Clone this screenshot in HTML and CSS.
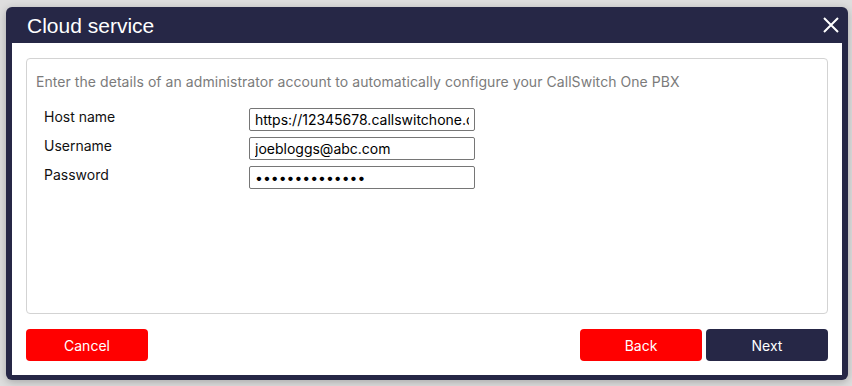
FILE: index.html
```html
<!DOCTYPE html>
<html lang="en">
<head>
    <meta charset="UTF-8">
    <meta name="viewport" content="width=device-width, initial-scale=1.0">
    <title>Cloud service</title>
    <link rel="stylesheet" href="styles.css">
</head>
<body>
    <div class="dialog">
        <div class="dialog-title">
            <h2>Cloud service</h2>
            <span class="close-btn">
                <svg width="16" height="16" viewBox="0 0 16 16">
                    <path d="M1 1 L15 15 M15 1 L1 15" stroke="#fff" stroke-width="2" fill="none"/>
                </svg>
            </span>
        </div>
        <div class="dialog-body">
            <div class="panel">
                <p class="intro">Enter the details of an administrator account to automatically configure your CallSwitch One PBX</p>
                <div class="form-grid">
                    <label for="host">Host name</label>
                    <input type="text" id="host" value="https://12345678.callswitchone.com">
                    <label for="username">Username</label>
                    <input type="text" id="username" value="joebloggs@abc.com">
                    <label for="password">Password</label>
                    <input type="password" id="password" value="password123456">
                </div>
            </div>
            <div class="actions">
                <button class="btn btn-red">Cancel</button>
                <div class="actions-right">
                    <button class="btn btn-red">Back</button>
                    <button class="btn btn-dark">Next</button>
                </div>
            </div>
        </div>
    </div>
</body>
</html>
```
FILE: styles.css
```css
* {
    margin: 0;
    padding: 0;
    box-sizing: border-box;
}

body {
    font-family: Inter, "Liberation Sans", sans-serif;
    background: #dedede;
    width: 852px;
    height: 386px;
    padding: 7px 4px 6px 6px;
}

.dialog {
    width: 842px;
    height: 373px;
    background: #262746;
    border-radius: 6px;
    padding: 0 6px 5px 6px;
    display: flex;
    flex-direction: column;
    box-shadow: 0 2px 8px rgba(0, 0, 0, 0.25);
}

.dialog-title {
    height: 36px;
    display: flex;
    align-items: center;
    justify-content: space-between;
    padding: 0 3px 0 15px;
}

.dialog-title h2 {
    font-family: "Liberation Sans", Arial, sans-serif;
    font-weight: normal;
    font-size: 21px;
    color: #fff;
    margin-top: 1px;
}

.close-btn {
    display: flex;
    cursor: pointer;
}

.dialog-body {
    flex: 1;
    background: #fff;
    padding: 15px 14px 14px 14px;
    display: flex;
    flex-direction: column;
}

.panel {
    flex: 1;
    border: 1px solid #d3d3d3;
    border-radius: 4px;
    padding: 14px 9px;
}

.intro {
    color: #7b7b7b;
    font-size: 14px;
    line-height: 18px;
    letter-spacing: 0.06px;
    margin-bottom: 17px;
}

.form-grid {
    display: grid;
    grid-template-columns: 205px 226px;
    grid-auto-rows: 23px;
    row-gap: 6px;
    padding-left: 8px;
}

label {
    font-size: 14px;
    color: #111;
    line-height: 18px;
}

input {
    height: 23px;
    width: 226px;
    border: 1px solid #767676;
    border-radius: 2px;
    padding: 0 5px;
    font-family: Inter, "Liberation Sans", sans-serif;
    font-size: 14px;
    color: #000;
    outline: none;
}

.actions {
    display: flex;
    justify-content: space-between;
    margin-top: 15px;
}

.actions-right {
    display: flex;
    gap: 4px;
}

.btn {
    width: 122px;
    height: 32px;
    border: none;
    border-radius: 4px;
    color: #fff;
    font-family: Inter, "Liberation Sans", sans-serif;
    font-size: 14px;
    cursor: pointer;
}

.btn-red {
    background: #ff0000;
}

.btn-dark {
    background: #262746;
}
```
